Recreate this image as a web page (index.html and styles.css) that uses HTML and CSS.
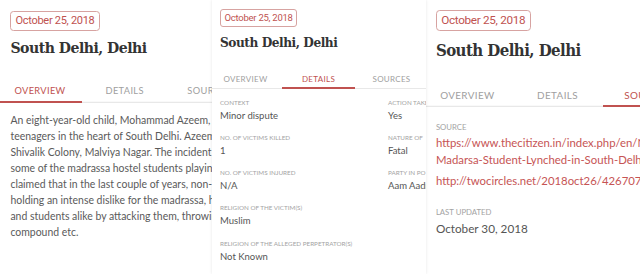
FILE: index.html
```html
<!DOCTYPE html>
<html lang="en">

<head>
  <meta charset="UTF-8" />
  <meta name="viewport" content="width=device-width, initial-scale=1.0" />
  <title>Incident - South Delhi, Delhi</title>
  <link rel="stylesheet" href="styles.css">
</head>

<body>
  <div class="strip">

    <div class="panel panel-overview">
      <div class="card">
        <div class="head">
          <span class="date">October 25, 2018</span>
          <h1 class="place">South Delhi, Delhi</h1>
        </div>
        <div class="tabs">
          <div class="tab active">Overview</div>
          <div class="tab">Details</div>
          <div class="tab">Sources</div>
        </div>
        <div class="body overview">
          <p class="summary">
            An eight-year-old child, Mohammad Azeem,<br>
            teenagers in the heart of South Delhi. Azeem<br>
            Shivalik Colony, Malviya Nagar. The incident h<br>
            some of the madrassa hostel students playin<br>
            claimed that in the last couple of years, non-<br>
            holding an intense dislike for the madrassa, h<br>
            and students alike by attacking them, throwin<br>
            compound etc.
          </p>
        </div>
      </div>
    </div>

    <div class="panel panel-details">
      <div class="card">
        <div class="head">
          <span class="date">October 25, 2018</span>
          <h1 class="place">South Delhi, Delhi</h1>
        </div>
        <div class="tabs">
          <div class="tab">Overview</div>
          <div class="tab active">Details</div>
          <div class="tab">Sources</div>
        </div>
        <div class="body details">
          <div class="col col-left">
            <div class="field">
              <div class="label">Context</div>
              <div class="value">Minor dispute</div>
            </div>
            <div class="field">
              <div class="label">No. of victims killed</div>
              <div class="value">1</div>
            </div>
            <div class="field">
              <div class="label">No. of victims injured</div>
              <div class="value">N/A</div>
            </div>
            <div class="field">
              <div class="label">Religion of the victim(s)</div>
              <div class="value">Muslim</div>
            </div>
            <div class="field">
              <div class="label">Religion of the alleged perpetrator(s)</div>
              <div class="value">Not Known</div>
            </div>
          </div>
          <div class="col col-right">
            <div class="field">
              <div class="label">Action taken</div>
              <div class="value">Yes</div>
            </div>
            <div class="field">
              <div class="label">Nature of</div>
              <div class="value">Fatal</div>
            </div>
            <div class="field">
              <div class="label">Party in po</div>
              <div class="value">Aam Aadmi</div>
            </div>
          </div>
        </div>
      </div>
    </div>

    <div class="panel panel-sources">
      <div class="card">
        <div class="head">
          <span class="date">October 25, 2018</span>
          <h1 class="place">South Delhi, Delhi</h1>
        </div>
        <div class="tabs">
          <div class="tab">Overview</div>
          <div class="tab">Details</div>
          <div class="tab active">Sources</div>
        </div>
        <div class="body sources">
          <div class="label">Source</div>
          <a class="link" href="#">https://www.thecitizen.in/index.php/en/NewsDetail/<br>Madarsa-Student-Lynched-in-South-Delhi</a>
          <a class="link" href="#">http://twocircles.net/2018oct26/426707.html</a>
          <div class="label updated">Last updated</div>
          <div class="value">October 30, 2018</div>
        </div>
      </div>
    </div>

  </div>
</body>

</html>
```

FILE: styles.css
```css
html {
  background: #fff;
}

body {
  margin: 0;
  font-family: Lato, "Open Sans", sans-serif;
  color: #555;
}

.strip {
  display: flex;
  height: 274px;
}

.panel {
  position: relative;
  overflow: hidden;
  background: #fff;
}

.panel-overview {
  width: 212px;
  padding-top: 11px;
}

.panel-details {
  width: 214px;
  padding-top: 9px;
  z-index: 1;
  box-shadow: 0 0 3px rgba(0, 0, 0, .1);
}

.panel-sources {
  width: 214px;
  padding-top: 10px;
}

/* one card, drawn at three sizes */
.card {
  width: 219px;
  margin-left: -3px;
}

.panel-overview .card {
  zoom: 1.16;
  margin-left: -2px;
}

.panel-sources .card {
  zoom: 1.235;
}

.head {
  display: flex;
  flex-direction: column;
  align-items: flex-start;
  padding-left: 11px;
}

.date {
  padding: 0 3.5px;
  border: 1px solid #d7a3a1;
  border-radius: 3px;
  line-height: 15.5px;
  font-family: Roboto, "Liberation Sans", sans-serif;
  font-size: 9.5px;
  letter-spacing: -.25px;
  color: #c05250;
}

.place {
  margin: 6px 0 0;
  line-height: 18px;
  font-family: "DejaVu Serif", serif;
  font-stretch: condensed;
  font-size: 13.5px;
  letter-spacing: -.45px;
  font-weight: bold;
  color: #333;
}

.tabs {
  display: flex;
  margin-top: 15px;
  box-shadow: inset 0 -1px 0 #e8e8e8;
}

.tab {
  flex: 1;
  padding: 8px 0 3px;
  border-bottom: 2px solid transparent;
  text-align: center;
  line-height: 10px;
  font-size: 8px;
  letter-spacing: .3px;
  text-transform: uppercase;
  color: #a0a0a0;
}

.tab.active {
  border-bottom-color: #c05250;
  color: #c05250;
}

.body {
  padding-left: 11px;
}

.overview {
  padding-top: 8px;
}

.summary {
  margin: 0;
  white-space: nowrap;
  line-height: 13.8px;
  font-size: 9px;
  color: #5a5a5a;
}

.details {
  display: flex;
  padding-top: 10px;
}

.col-left {
  width: 168px;
  flex-shrink: 0;
}

.col {
  white-space: nowrap;
}

.field {
  margin-bottom: 11.5px;
}

.label {
  line-height: 8px;
  font-size: 6.3px;
  text-transform: uppercase;
  color: #a3a3a3;
}

.value {
  margin-top: 2px;
  line-height: 13.8px;
  font-size: 9.5px;
  color: #555;
}

.sources {
  padding-top: 12.5px;
  white-space: nowrap;
}

.link {
  display: block;
  margin-top: 2.5px;
  line-height: 13.8px;
  font-size: 9.2px;
  color: #c65454;
  text-decoration: none;
}

.sources .label + .link {
  margin-top: 1.5px;
}

.label.updated {
  margin-top: 15.5px;
}
```
